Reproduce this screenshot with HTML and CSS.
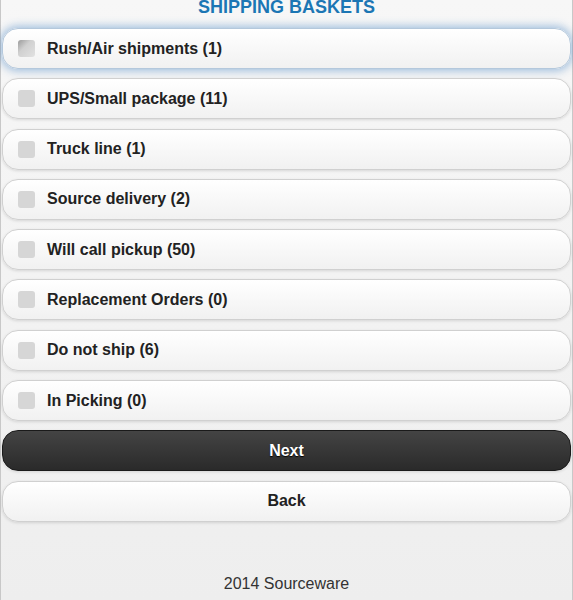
FILE: index.html
```html
<!DOCTYPE html>
<html lang="en">
<head>
    <meta charset="UTF-8">
    <meta name="viewport" content="width=device-width, initial-scale=1.0">
    <title>Shipping Baskets</title>
    <link rel="stylesheet" href="styles.css">
</head>
<body>
<div class="page">
    <h2 class="title">SHIPPING BASKETS</h2>

    <div class="list">
        <label class="row focus"><span class="box"></span>Rush/Air shipments (1)</label>
        <label class="row"><span class="box"></span>UPS/Small package (11)</label>
        <label class="row"><span class="box"></span>Truck line (1)</label>
        <label class="row"><span class="box"></span>Source delivery (2)</label>
        <label class="row"><span class="box"></span>Will call pickup (50)</label>
        <label class="row"><span class="box"></span>Replacement Orders (0)</label>
        <label class="row"><span class="box"></span>Do not ship (6)</label>
        <label class="row"><span class="box"></span>In Picking (0)</label>

        <button class="btn dark">Next</button>
        <button class="btn">Back</button>
    </div>

    <div class="footer">2014 Sourceware</div>
</div>
</body>
</html>
```

FILE: styles.css
```css
html, body { margin: 0; padding: 0; }
body { font-family: "Liberation Sans", Arial, sans-serif; background: #f0f0f0; overflow: hidden; }
.page { width: 569px; height: 600px; border-left: 1px solid #c8c8c8; border-right: 1px solid #c8c8c8; padding: 0 1px; background: linear-gradient(#f7f7f7, #eeeeee); }
.title { margin: 0; height: 28px; line-height: 14px; font-size: 18px; font-weight: bold; color: #1c76b4; text-align: center; }
.list { display: flex; flex-direction: column; gap: 9.3px; }
.row { display: flex; align-items: center; gap: 12px; height: 39px; padding-left: 15px; border: 1px solid #d0d0d0; border-radius: 16px; background: linear-gradient(#ffffff, #f1f1f1); box-shadow: 0 1px 3px rgba(0,0,0,0.12); font-size: 16px; font-weight: bold; color: #222; }
.row.focus { border-color: #b4c8dc; box-shadow: 0 0 8px 2px rgba(56,123,190,0.45); }
.box { width: 17px; height: 17px; border-radius: 3px; background: #d6d6d6; flex: none; }
.focus .box { background: linear-gradient(135deg, #9a9a9a 0%, #d0d0d0 40%, #e2e2e2 100%); }
.btn { height: 41px; border: 1px solid #d0d0d0; border-radius: 16px; background: linear-gradient(#ffffff, #f1f1f1); box-shadow: 0 1px 3px rgba(0,0,0,0.12); font-family: inherit; font-size: 16px; font-weight: bold; color: #222; padding: 0; }
.btn.dark { background: linear-gradient(#444444, #2a2a2a); border-color: #1a1a1a; color: #fff; text-shadow: 0 1px 1px #000; }
.footer { margin-top: 53px; text-align: center; font-size: 16px; color: #333; }
```
